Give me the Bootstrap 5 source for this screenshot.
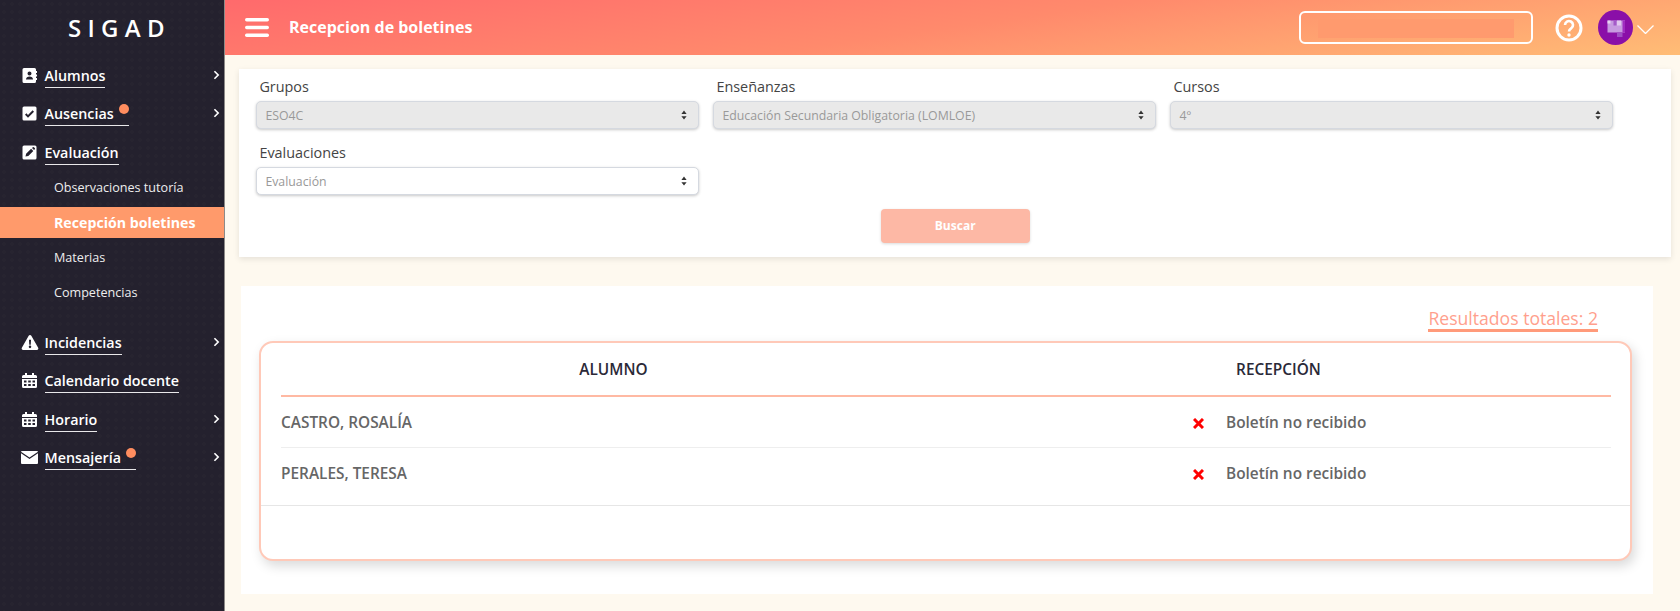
<!DOCTYPE html>
<html lang="es">
<head>
<meta charset="utf-8">
<title>SIGAD</title>
<link href="https://cdn.jsdelivr.net/npm/bootstrap@5.3.0/dist/css/bootstrap.min.css" rel="stylesheet">
<style>
html,body{height:100%;overflow:hidden}
body{font-family:"Open Sans",sans-serif;background:#fef9ef;color:#444}
.side{width:225px;height:611px;background-color:#24212e;background-image:radial-gradient(rgba(255,255,255,.01) 35%,transparent 36%);background-size:8px 8px;border-right:1px solid #8d8a88;color:#fff;flex:none}
.brand{height:56.5px;font-size:24px;font-weight:600;letter-spacing:6.3px;padding-left:68px;line-height:56px}
.mitem{height:38.5px;padding:8px 4px 0 22px;color:#fff;text-decoration:none;font-size:14.3px;font-weight:600;line-height:22px}
.mitem:hover{color:#fff}
.mitem.short{height:36.5px}
.mitem.after{margin-top:13.5px}
.mico{width:15px;height:15px;margin:3px 7.5px 0 0;flex:none;fill:#fff}
.mtxt{border-bottom:1px solid #e9e8ea;height:23px;position:relative;white-space:nowrap}
.mtxt.wdot{padding-right:15px}
.ddot{position:absolute;right:0;top:1px;width:10px;height:10px;border-radius:50%;background:#ff8d5f}
.chev{margin:5px 0 0 auto;width:7px;height:10px;fill:none;stroke:#fff;stroke-width:2}
.sub{height:35px;padding-left:54px;color:#eee;font-size:12.6px;line-height:35px;text-decoration:none}
.sub:hover{color:#eee}
.sub.on{background:#ff9a6b;color:#fff;font-weight:700;height:31px;line-height:32px;margin:2px 0;font-size:14.2px}
.tbar{height:55px;background:linear-gradient(172deg,#ff6a6c 0%,#ff8a6c 50%,#ffbd76 100%);padding:0 26px 0 20px;color:#fff}
.tbar h1{font-size:16px;font-weight:700;margin:0 0 0 20px;line-height:55px}
.burger{width:24px;height:19px;fill:#fff;flex:none}
.sbox{width:234px;height:33px;border:2px solid #fff;border-radius:6px;padding:6px 17px;margin-right:22px}
.sblur{height:19px;background:#ff9a6e;filter:blur(.6px)}
.help{width:28px;height:28px;margin-right:15px}
.avat{width:35px;height:35px;margin-right:4px}
.cdown{width:17px;height:9px;fill:none;stroke:#fff;stroke-width:1.3;margin-top:4px}
.pane1{margin:14px 9px 0 14px;background:#fff;height:188px;padding:8px 17px 14px 17.4px;box-shadow:0 2px 6px rgba(0,0,0,.1)}
.fgrid{display:grid;grid-template-columns:repeat(3,443px);column-gap:14px;row-gap:14px}
.lbl{display:block;font-size:14.4px;line-height:20px;margin:0 0 4px 3px;color:#444}
.fsel{height:28px;min-height:0;padding:1px 28px 0 8px;font-size:12.3px;line-height:26px;color:#999;border:1px solid #d5d9e0;border-radius:5px;box-shadow:0 1px 3px rgba(0,0,0,.22);background-image:url("data:image/svg+xml,%3Csvg xmlns='http://www.w3.org/2000/svg' viewBox='0 0 8 12'%3E%3Cpath fill='%23333' d='M4 0l3.500 4.500H.5zM4 12L.5 7.500h7z'/%3E%3C/svg%3E");background-size:6px 10px;background-position:right 11px center}
.fsel:disabled{background-color:#e9e9e9;color:#999}
.gobtn{display:block;width:149px;height:34px;margin:14px auto 0;background:#fdb8a5;border:0;border-radius:4px;color:#fff;font-size:12px;font-weight:700;box-shadow:0 1px 3px rgba(0,0,0,.15);opacity:1}
.pane2{margin:29px 27px 0 16px;background:#fff;height:308px;padding:0 21px 0 18px}
.restot{height:55px;padding-right:34px}
.restot span{font-size:17.6px;color:#ff9f8d;line-height:24px;border-bottom:3px solid #ff9a7a;height:26px;margin-top:20px;white-space:nowrap}
.tcard{height:220px;border:2px solid #ffc9b8;border-radius:14px;box-shadow:3px 5px 12px rgba(0,0,0,.15);background:#fff}
.ttab{width:1330px;margin:0 0 6px 20px;table-layout:fixed}
.ttab th{height:53px;text-align:center;vertical-align:middle;font-size:15.4px;font-weight:600;color:#2b2938;border-bottom:2px solid #ffb9a3;padding:2px 0 0}
.ttab td{height:51px;vertical-align:middle;font-size:15.4px;font-weight:600;color:#666;padding:1px 0 0;border-bottom:1px solid #eee;box-shadow:none}
.ttab tr:last-child td{border-bottom:0;height:52px}
.ttab .rcp{padding-left:247px}
.xmark{width:11px;height:11px;stroke:#f00;stroke-width:3;margin-right:22px;vertical-align:-1px}
.tfoot{border-top:1px solid #e6e6e6;height:52px}
</style>
</head>
<body class="d-flex">
<aside class="side d-flex flex-column">
  <div class="brand">SIGAD</div>
  <nav class="d-flex flex-column">
    <a class="mitem d-flex" href="#"><svg class="mico" viewBox="0 0 15 15"><path fill-rule="evenodd" d="M2 0h10.500a1.500 1.500 0 0 1 1.500 1.500V3h1v2h-1v1.500h1v2h-1V10h1v2h-1v1.500a1.500 1.500 0 0 1-1.500 1.500H2a1.500 1.500 0 0 1-1.500-1.500v-12A1.500 1.500 0 0 1 2 0zm5.500 3.500a2 2 0 1 0 0 4 2 2 0 0 0 0-4zM4 11.500h7c0-1.800-1.500-3-3.500-3S4 9.700 4 11.500z"/></svg><span class="mtxt">Alumnos</span><svg class="chev" viewBox="0 0 8 12"><path d="M1.500 1.500L6 6l-4.500 4.500"/></svg></a>
    <a class="mitem d-flex" href="#"><svg class="mico" viewBox="0 0 15 15"><path fill-rule="evenodd" d="M2 .500h11A1.500 1.500 0 0 1 14.500 2v11a1.500 1.500 0 0 1-1.500 1.500H2A1.500 1.500 0 0 1 .5 13V2A1.500 1.500 0 0 1 2 .5zm4 11.200l6-6-1.400-1.400L6 8.900 4.400 7.300 3 8.700z"/></svg><span class="mtxt wdot">Ausencias<i class="ddot"></i></span><svg class="chev" viewBox="0 0 8 12"><path d="M1.500 1.500L6 6l-4.500 4.500"/></svg></a>
    <a class="mitem short d-flex" href="#"><svg class="mico" viewBox="0 0 15 15"><path fill-rule="evenodd" d="M2 .500h11A1.500 1.500 0 0 1 14.500 2v11a1.500 1.500 0 0 1-1.500 1.500H2A1.500 1.500 0 0 1 .5 13V2A1.500 1.500 0 0 1 2 .5zM3.500 11.500l2.800-.6 5-5-2.200-2.200-5 5zM10 3l2 2 .8-.8a.8.8 0 0 0 0-1.100l-.9-.9a.8.8 0 0 0-1.100 0z"/></svg><span class="mtxt">Evaluación</span></a>
    <a class="sub" href="#">Observaciones tutoría</a>
    <a class="sub on" href="#">Recepción boletines</a>
    <a class="sub" href="#">Materias</a>
    <a class="sub" href="#">Competencias</a>
    <a class="mitem after d-flex" href="#"><svg class="mico" viewBox="0 0 18 16" style="width:18px;margin-left:-1px;margin-right:5.500px"><path fill-rule="evenodd" d="M9 0c.6 0 1.100.3 1.400.8l7.300 12.800c.6 1-.1 2.300-1.400 2.300H1.700c-1.300 0-2-1.300-1.400-2.300L7.600.8C7.900.3 8.400 0 9 0zM7.900 5l.3 5.500h1.600L10.100 5zM9 11.300a1.300 1.300 0 1 0 0 2.700 1.300 1.300 0 0 0 0-2.700z"/></svg><span class="mtxt">Incidencias</span><svg class="chev" viewBox="0 0 8 12"><path d="M1.500 1.500L6 6l-4.500 4.500"/></svg></a>
    <a class="mitem d-flex" href="#"><svg class="mico" viewBox="0 0 15 15"><path fill-rule="evenodd" d="M3 0h2v2h5V0h2v2h1.500A1.500 1.500 0 0 1 15 3.500V5H0V3.500A1.500 1.500 0 0 1 1.500 2H3zM0 6h15v7.500a1.500 1.500 0 0 1-1.500 1.500h-12A1.500 1.500 0 0 1 0 13.500zm2 1.500v2h2.500v-2zm4.200 0v2h2.600v-2zm4.300 0v2H13v-2zM2 11v2h2.500v-2zm4.200 0v2h2.600v-2zm4.300 0v2H13v-2z"/></svg><span class="mtxt">Calendario docente</span></a>
    <a class="mitem d-flex" href="#"><svg class="mico" viewBox="0 0 15 15"><path fill-rule="evenodd" d="M3 0h2v2h5V0h2v2h1.500A1.500 1.500 0 0 1 15 3.500V5H0V3.500A1.500 1.500 0 0 1 1.500 2H3zM0 6h15v7.500a1.500 1.500 0 0 1-1.500 1.500h-12A1.500 1.500 0 0 1 0 13.500zm2 1.500v2h2.500v-2zm4.200 0v2h2.600v-2zm4.300 0v2H13v-2zM2 11v2h2.500v-2zm4.200 0v2h2.600v-2zm4.300 0v2H13v-2z"/></svg><span class="mtxt">Horario</span><svg class="chev" viewBox="0 0 8 12"><path d="M1.500 1.500L6 6l-4.500 4.500"/></svg></a>
    <a class="mitem d-flex" href="#"><svg class="mico" viewBox="0 0 17 13" style="width:17px;margin-left:-1px;margin-right:6.500px"><path d="M1 0h15a1 1 0 0 1 1 .8L8.500 6.500 0 .8A1 1 0 0 1 1 0zM0 2.300l8.500 5.600L17 2.300V12a1 1 0 0 1-1 1H1a1 1 0 0 1-1-1z"/></svg><span class="mtxt wdot">Mensajería<i class="ddot"></i></span><svg class="chev" viewBox="0 0 8 12"><path d="M1.500 1.500L6 6l-4.500 4.500"/></svg></a>
  </nav>
</aside>
<main class="flex-grow-1 d-flex flex-column">
  <header class="tbar d-flex align-items-center">
    <svg class="burger" viewBox="0 0 24 19"><rect y="0" width="24" height="3.500" rx="1.700"/><rect y="7.800" width="24" height="3.500" rx="1.700"/><rect y="15.500" width="24" height="3.500" rx="1.700"/></svg>
    <h1>Recepcion de boletines</h1>
    <div class="sbox ms-auto"><div class="sblur"></div></div>
    <svg class="help" viewBox="0 0 28 28"><circle cx="14" cy="14" r="12" fill="none" stroke="#fff" stroke-width="3"/><path d="M10 11a4 4 0 1 1 6.300 3.300c-1.300.9-2.300 1.500-2.300 3.200" fill="none" stroke="#fff" stroke-width="2.600"/><circle cx="14" cy="21" r="1.700" fill="#fff"/></svg>
    <svg class="avat" viewBox="0 0 35 35"><circle cx="17.500" cy="17.500" r="17.500" fill="#8a0fa8"/><rect x="9.500" y="10.500" width="17.500" height="12" fill="#c79be0"/><rect x="9.500" y="10.500" width="3" height="3" fill="#e6d4f0"/><rect x="15.500" y="10.500" width="3" height="5" fill="#a45ac8"/><rect x="19" y="10.500" width="4" height="5" fill="#e1c8ee"/><rect x="24.500" y="10.500" width="2.500" height="12" fill="#a02cc0"/><rect x="19" y="22.500" width="5.500" height="4.500" fill="#a04fc4"/></svg>
    <svg class="cdown" viewBox="0 0 17 9"><path d="M.5.500l8 8 8-8"/></svg>
  </header>
  <section class="pane1">
    <form class="fgrid">
      <div><label class="lbl">Grupos</label><select class="form-select fsel" disabled><option>ESO4C</option></select></div>
      <div><label class="lbl">Enseñanzas</label><select class="form-select fsel" disabled><option>Educación Secundaria Obligatoria (LOMLOE)</option></select></div>
      <div><label class="lbl">Cursos</label><select class="form-select fsel" disabled><option>4º</option></select></div>
      <div><label class="lbl">Evaluaciones</label><select class="form-select fsel"><option>Evaluación</option></select></div>
    </form>
    <button class="btn gobtn" type="button">Buscar</button>
  </section>
  <section class="pane2">
    <div class="restot d-flex justify-content-end"><span>Resultados totales: 2</span></div>
    <div class="tcard">
      <table class="table ttab">
        <thead><tr><th>ALUMNO</th><th>RECEPCIÓN</th></tr></thead>
        <tbody>
          <tr><td>CASTRO, ROSALÍA</td><td class="rcp"><svg class="xmark" viewBox="0 0 11 11"><path d="M1 1l9 9M10 1l-9 9"/></svg>Boletín no recibido</td></tr>
          <tr><td>PERALES, TERESA</td><td class="rcp"><svg class="xmark" viewBox="0 0 11 11"><path d="M1 1l9 9M10 1l-9 9"/></svg>Boletín no recibido</td></tr>
        </tbody>
      </table>
      <div class="tfoot"></div>
    </div>
  </section>
</main>
</body>
</html>
